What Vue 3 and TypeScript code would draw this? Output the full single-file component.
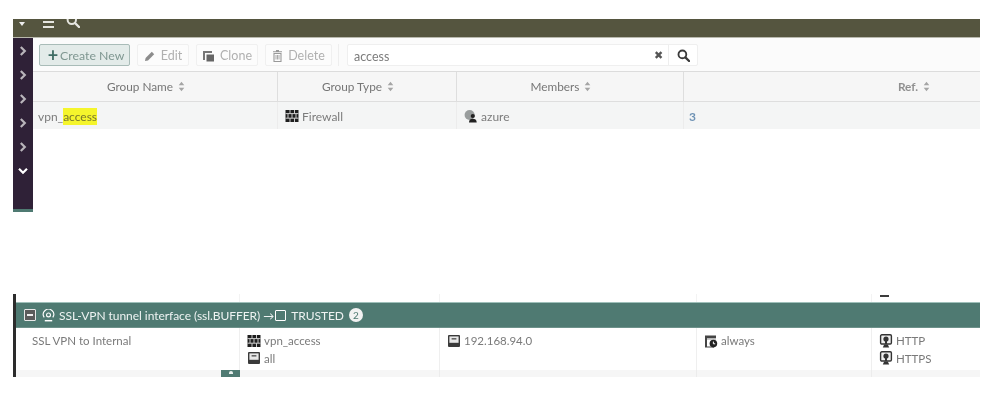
<script setup lang="ts">
const chevrons = [0, 1, 2, 3, 4]
const headers = [
  { label: 'Group Name', cls: 'c1' },
  { label: 'Group Type', cls: 'c2' },
  { label: 'Members', cls: 'c3' },
  { label: 'Ref.', cls: 'c4' },
]
</script>

<template>
  <div class="page">
    <svg class="defs" width="0" height="0" aria-hidden="true">
      <symbol id="sort" viewBox="0 0 8 12">
        <path d="M4 0.5 7.2 4.6H.8ZM4 11.5 .8 7.4H7.2Z" fill="currentColor" />
      </symbol>
      <symbol id="firewall" viewBox="0 0 14 14">
        <path d="M.5 1h13v12H.5z" fill="#1e1e1e" />
        <path d="M.5 4.6h13M.5 9.2h13M5 1v3.6M9.5 1v3.6M3 4.6v4.6M7 4.6v4.6M11 4.6v4.6M5 9.2v3.8M9.5 9.2v3.8" stroke="#dedede" stroke-width=".9" fill="none" />
      </symbol>
      <symbol id="user" viewBox="0 0 14 14">
        <circle cx="5.6" cy="6" r="5" fill="#999d9d" />
        <circle cx="8.8" cy="7" r="2.1" fill="#222" />
        <path d="M5 13.4c0-2.6 1.6-3.6 3.8-3.6s3.9 1 3.9 3.6z" fill="#222" />
      </symbol>
      <symbol id="address" viewBox="0 0 14 14">
        <rect x="1" y="1" width="12" height="12" rx="1" fill="#3a3a3a" />
        <rect x="2.4" y="2.4" width="9.2" height="6.4" fill="#e8e8e8" />
        <rect x="4.6" y="4" width="4.8" height="1.6" fill="#666" />
      </symbol>
      <symbol id="schedule" viewBox="0 0 14 14">
        <path d="M1 1.5h11v3H3v8h7v1H1z" fill="#444" />
        <path d="M3 4.5h9v1.5H3z" fill="#ccc" />
        <circle cx="9.4" cy="9.6" r="3.8" fill="#222" />
        <path d="M9.4 7.6v2.2h1.8" stroke="#fff" stroke-width="1" fill="none" />
      </symbol>
      <symbol id="service" viewBox="0 0 14 14">
        <rect x="1.6" y=".8" width="10.8" height="9.2" rx="1.2" fill="#eee" stroke="#333" stroke-width="1.4" />
        <circle cx="7" cy="5" r="2.6" fill="#333" />
        <path d="M7 7v3" stroke="#333" stroke-width="2" />
        <path d="M3.8 13.6 5.2 10.4H8.8L10.2 13.6Z" fill="#333" />
      </symbol>
      <symbol id="search" viewBox="0 0 14 14">
        <circle cx="5.8" cy="5.8" r="4.2" fill="none" stroke="currentColor" stroke-width="2" />
        <path d="M9 9 13 13" stroke="currentColor" stroke-width="2.4" stroke-linecap="round" />
      </symbol>
      <symbol id="chev" viewBox="0 0 8 10">
        <path d="M1.8 1 5.8 5 1.8 9" fill="none" stroke="currentColor" stroke-width="2.2" />
      </symbol>
    </svg>

    <section class="upper">
      <header class="topbar">
        <span class="caret"></span>
        <span class="burger"><i></i><i></i></span>
        <svg class="top-search"><use href="#search" /></svg>
      </header>
      <div class="upper-body">
        <nav class="rail">
          <svg v-for="c in chevrons" :key="c" class="chev"><use href="#chev" /></svg>
          <svg class="chev open"><use href="#chev" /></svg>
          <span class="rail-foot"></span>
        </nav>
        <div class="main">
          <div class="toolbar">
            <button class="btn primary"><b>+</b>Create New</button>
            <button class="btn edit">
              <svg width="12" height="12" viewBox="0 0 12 12"><path d="M1 11 1.6 8 7.8 1.8 10.2 4.2 4 10.4Z" fill="#8c8c8c" /></svg>
              Edit
            </button>
            <button class="btn clone">
              <svg width="13" height="12" viewBox="0 0 13 12"><path d="M1 1h9v2H3v7H1z" fill="#777" /><path d="M4.5 4.5h7.5V11.5H4.5z" fill="#666" /></svg>
              Clone
            </button>
            <button class="btn del">
              <svg width="11" height="12" viewBox="0 0 11 12"><path d="M2 3.5h7v8H2zM1 1.8h9M4 .6h3" fill="none" stroke="#999" stroke-width="1.1" /><path d="M4 5v4.5M5.5 5v4.5M7 5v4.5" stroke="#aaa" /></svg>
              Delete
            </button>
            <span class="divider"></span>
            <div class="search">
              <span class="query">access</span>
              <span class="clear">✖</span>
              <span class="go"><svg width="13" height="13"><use href="#search" /></svg></span>
            </div>
          </div>
          <div class="thead">
            <div v-for="h in headers" :key="h.label" class="th" :class="h.cls">
              {{ h.label }}<svg class="sort"><use href="#sort" /></svg>
            </div>
          </div>
          <div class="tr">
            <div class="td c1 name">vpn_<mark>access</mark></div>
            <div class="td c2"><svg class="ico"><use href="#firewall" /></svg>Firewall</div>
            <div class="td c3"><svg class="ico"><use href="#user" /></svg>azure</div>
            <div class="td c4 ref">3</div>
          </div>
        </div>
      </div>
    </section>

    <section class="lower">
      <div class="stub">
        <span class="s1"></span><span class="s2"></span><span class="s3"></span><span class="s4"><i></i></span><span class="s5"></span>
      </div>
      <div class="band">
        <span class="collapse"><i></i></span>
        <svg class="tunnel" width="13" height="13" viewBox="0 0 14 14">
          <path d="M2.4 9A5.6 5.6 0 1 1 11.6 9" fill="none" stroke="#fff" stroke-width="1.2" />
          <circle cx="7" cy="6.4" r="2.1" fill="none" stroke="#fff" stroke-width="1.2" />
          <path d="M3 12.6h8" stroke="#fff" stroke-width="1.6" />
        </svg>
        <span class="band-text">SSL-VPN tunnel interface (ssl.BUFFER)</span>
        <span class="arrow">→</span>
        <span class="port"></span>
        <span class="band-text trusted">TRUSTED</span>
        <span class="count">2</span>
      </div>
      <div class="policy">
        <div class="pc p1">SSL VPN to Internal</div>
        <div class="pc p2">
          <div class="line"><svg class="ico"><use href="#firewall" /></svg>vpn_access</div>
          <div class="line"><svg class="ico"><use href="#address" /></svg>all</div>
        </div>
        <div class="pc p3">
          <div class="line"><svg class="ico"><use href="#address" /></svg>192.168.94.0</div>
        </div>
        <div class="pc p4">
          <div class="line"><svg class="ico"><use href="#schedule" /></svg>always</div>
        </div>
        <div class="pc p5">
          <div class="line"><svg class="ico"><use href="#service" /></svg>HTTP</div>
          <div class="line"><svg class="ico"><use href="#service" /></svg>HTTPS</div>
        </div>
      </div>
      <div class="foot">
        <span class="f1"><span class="tab"><i></i></span></span><span class="f2"></span><span class="f3"></span><span class="f4"></span><span class="f5"></span>
      </div>
    </section>
  </div>
</template>

<style>
html, body { margin: 0; background: #fff; }
</style>

<style scoped>
.page {
  box-sizing: border-box;
  width: 1000px;
  height: 404px;
  padding: 19px 20px 0 13px;
  overflow: hidden;
  background: #fff;
  font-family: Lato, "Open Sans", sans-serif;
  font-size: 12px;
  color: #7a7a7a;
  filter: blur(0.6px);
}
.defs { position: absolute; }

.upper { height: 193px; }
.topbar {
  height: 19px;
  display: flex;
  align-items: flex-start;
  background: #55553f;
  border-bottom: 1px solid #b9b9ae;
  box-sizing: border-box;
  overflow: hidden;
  color: #e6e6e0;
}
.caret {
  margin: 3px 0 0 6px;
  border: 3px solid transparent;
  border-top: 4px solid #eee;
  border-bottom: 0;
}
.burger {
  margin: 2px 0 0 18px;
  width: 11px;
  display: flex;
  flex-direction: column;
  gap: 3px;
}
.burger i { display: block; height: 2px; background: #e6e6e0; }
.top-search { width: 14px; height: 14px; margin: -5px 0 0 12px; }

.upper-body { display: flex; height: 174px; }
.rail {
  width: 20px;
  flex: none;
  position: relative;
  background: #2f2137;
  display: flex;
  flex-direction: column;
  align-items: center;
  padding-top: 7.5px;
  box-sizing: border-box;
  color: #b9b5bb;
}
.chev { width: 8px; height: 10px; margin-bottom: 14.2px; flex: none; }
.chev.open { transform: rotate(90deg); color: #fff; }
.rail-foot {
  position: absolute;
  left: 0; right: 0; bottom: 0;
  height: 3px;
  background: #4f7a72;
}

.main { flex: 1; min-width: 0; }
.toolbar {
  height: 34px;
  box-sizing: border-box;
  padding: 6px 0 0 6px;
  display: flex;
  align-items: flex-start;
  background: #fbfbfb;
  border-bottom: 1px solid #dcdcdc;
}
.btn {
  height: 22px;
  box-sizing: border-box;
  padding: 1px 0 0;
  display: flex;
  align-items: center;
  justify-content: center;
  gap: 5px;
  border: 1px solid #f0f0f0;
  border-radius: 2px;
  background: #fcfcfc;
  color: #b0b0b0;
  font: inherit;
  font-size: 12.5px;
  margin-right: 7px;
}
.btn.primary {
  width: 91px;
  gap: 2px;
  padding-left: 3px;
  background: #e3ebe9;
  border-color: #a9bcb8;
  color: #7f9791;
  margin-right: 7px;
  font-size: 12.3px;
}
.btn.primary b { color: #3f6d64; font-size: 18px; line-height: 1; margin-top: -2px; }
.btn.edit { width: 52px; }
.btn.clone { width: 62px; }
.btn.del { width: 67px; margin-right: 6px; }
.divider { width: 1px; height: 22px; background: #eee; margin-right: 8px; }
.search {
  width: 351px;
  height: 22px;
  box-sizing: border-box;
  display: flex;
  align-items: center;
  background: #fff;
  border: 1px solid #efefef;
  border-radius: 2px;
}
.query { flex: 1; padding: 2px 0 0 6px; font-size: 12.5px; color: #7c7c7c; }
.clear { font-size: 11px; color: #555; margin-right: 5px; }
.go {
  width: 28px;
  height: 20px;
  display: flex;
  align-items: center;
  justify-content: center;
  border-left: 1px solid #eee;
  color: #3a3a3a;
}

.thead, .tr { display: flex; }
.thead { height: 30px; background: #f6f6f6; border-bottom: 1px solid #dedede; box-sizing: border-box; }
.th {
  box-sizing: border-box;
  display: flex;
  align-items: center;
  justify-content: center;
  gap: 5px;
  padding: 0 18px 0 0;
  font-size: 11.8px;
  color: #767676;
  border-right: 1px solid #dedede;
}
.c1 { width: 245px; flex: none; }
.c2 { width: 179px; flex: none; }
.c3 { width: 227px; flex: none; }
.c4 { flex: 1; border-right: 0; }
.th.c4 { padding: 0 0 0 164px; border-right: 0; font-weight: 700; color: #909090; }
.sort { width: 7px; height: 11px; color: #a5a5a5; }
.tr { height: 27px; background: #f4f5f5; }
.td {
  box-sizing: border-box;
  display: flex;
  align-items: center;
  padding: 1px 0 0 7px;
  font-size: 12px;
  color: #7c7c7c;
  border-right: 1px solid #ececec;
}
.name { padding-left: 5px; }
.td.c4 { border-right: 0; padding-left: 5px; }
.ref { color: #6f93b5; font-weight: 700; }
mark { background: #f5f52c; color: #77772a; padding: 1px 0; }
.ico { width: 14px; height: 14px; margin-right: 3px; flex: none; }

.lower { margin-top: 82px; height: 83px; border-left: 3px solid #2c2c2c; box-sizing: border-box; }
.stub { height: 8px; display: flex; }
.stub span { box-sizing: border-box; height: 8px; border-right: 1px solid #f3f3f3; flex: none; }
.s1 { width: 224px; }
.s2 { width: 200px; }
.s3 { width: 257px; }
.s4 { width: 175px; }
.s5 { flex: 1 !important; border-right: 0 !important; }
.s4 { position: relative; }
.s4 i {
  position: absolute;
  left: 183px;
  top: 1px;
  width: 9px;
  height: 2px;
  background: #3c3c3c;
}
.band {
  height: 26px;
  box-sizing: border-box;
  display: flex;
  align-items: center;
  padding-left: 8px;
  background: #4f7a72;
  border-top: 1px solid #9fc0ba;
  border-bottom: 1px solid #6d918a;
  color: #eef3f2;
  font-size: 12px;
}
.collapse {
  width: 12px;
  height: 12px;
  box-sizing: border-box;
  display: flex;
  align-items: center;
  justify-content: center;
  background: #5b5b5b;
  border: 1.5px solid #e8e8e8;
  border-radius: 1px;
  margin-right: 6px;
}
.collapse i { width: 6px; height: 2px; background: #eee; }
.tunnel { margin-right: 4px; }
.band-text { letter-spacing: -0.05px; white-space: nowrap; }
.arrow { margin: 0 1px 0 3px; font-size: 11px; }
.port { width: 9px; height: 9px; border: 1px solid #fff; border-radius: 1px; margin-right: 5px; }
.count {
  width: 14px;
  height: 14px;
  margin-left: 5px;
  border-radius: 50%;
  background: #f2f2f2;
  color: #4f7a72;
  font-size: 10px;
  display: flex;
  align-items: center;
  justify-content: center;
}
.policy { display: flex; height: 42px; }
.pc {
  box-sizing: border-box;
  flex: none;
  padding: 4px 0 0 7px;
  font-size: 11.5px;
  color: #7a7a7a;
  border-right: 1px solid #efefef;
}
.p1 { width: 224px; padding-left: 16px; padding-top: 6px; }
.p2 { width: 200px; }
.p3 { width: 257px; }
.p4 { width: 175px; }
.p5 { flex: 1; border-right: 0; }
.line { height: 17.5px; display: flex; align-items: center; white-space: nowrap; }
.foot { display: flex; height: 7px; background: #f6f6f6; }
.foot span { box-sizing: border-box; flex: none; border-right: 1px solid #ececec; height: 7px; }
.f1 { width: 224px; position: relative; }
.f2 { width: 200px; }
.f3 { width: 257px; }
.f4 { width: 175px; }
.foot .f5 { flex: 1; border-right: 0; }
.foot .tab {
  position: absolute;
  right: -1px;
  top: 0;
  width: 19px;
  height: 7px;
  background: #4f7a72;
  border: 0;
  display: flex;
  justify-content: center;
}
.tab i { width: 4px; height: 3px; margin-top: 1px; background: #e8f0ee; border-radius: 2px 2px 0 0; }
</style>
